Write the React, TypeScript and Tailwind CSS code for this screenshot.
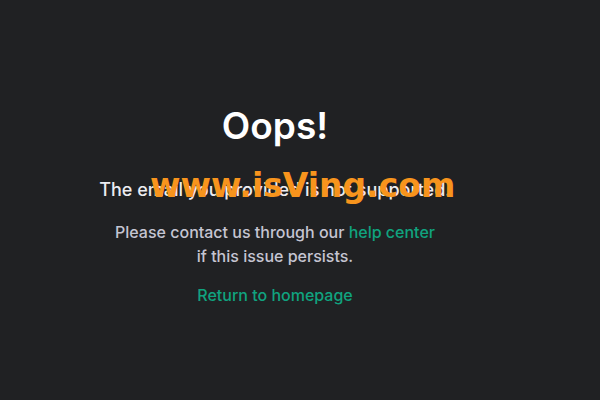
export default function App() {
  return (
    <div className="relative h-[400px] w-[600px] overflow-hidden bg-[#202123] font-['Inter',sans-serif]">
      <div className="flex flex-col items-center pr-[50px] pt-[106px] text-center">
        <h1 className="text-[37px] font-semibold leading-[40px] text-white">Oops!</h1>
        <p className="mt-[30px] text-[18px] font-medium leading-[28px] text-[#ececf1]">
          The email you provided is not supported.
        </p>
        <p className="mt-[16px] text-[16px] font-medium leading-[24px] text-[#c5c5d2]">
          Please contact us through our{" "}
          <a href="#" className="text-[#10a37f]">
            help center
          </a>
          <br />
          if this issue persists.
        </p>
        <a href="#" className="mt-[15px] text-[16px] font-medium leading-[24px] text-[#10a37f]">
          Return to homepage
        </a>
      </div>
      {/* watermark overlay */}
      <div className="pointer-events-none absolute left-[150px] top-[166px] font-['DejaVu_Sans',sans-serif] text-[33px] font-bold leading-[40px] text-[#f7941d]">
        www.isVing.com
      </div>
    </div>
  );
}
